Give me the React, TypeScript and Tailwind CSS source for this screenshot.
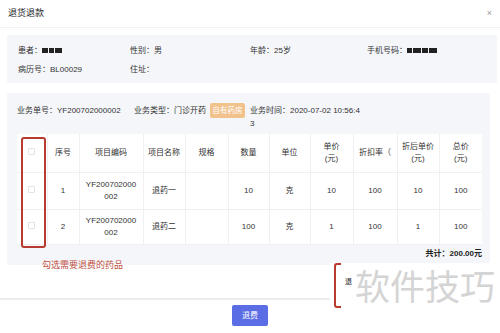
import React from "react";

const cols = [30, 32, 64, 42, 43, 41, 41, 43, 44, 42, 43];

function Blob({ w }: { w: number }) {
  return <span className="inline-block bg-[#222] align-middle mr-[1px]" style={{ width: w, height: 5 }} />;
}

function Cb() {
  return <span className="inline-block w-[7px] h-[7px] border border-[#e3e3e3] bg-white rounded-[1px]" />;
}

export default function App() {
  const rows = [
    { no: "1", name: "退药一", qty: "10", unit: "克", price: "10", rate: "100", dp: "10", total: "100" },
    { no: "2", name: "退药二", qty: "100", unit: "克", price: "1", rate: "100", dp: "1", total: "100" },
  ];
  return (
    <div
      className="w-[500px] h-[333px] bg-white relative overflow-hidden text-[#333]"
      style={{ fontFamily: '"Liberation Sans","Noto Sans CJK SC",sans-serif' }}
    >
      {/* header */}
      <div className="h-[28px] flex items-center justify-between pl-[8px] pr-[8px] border-b border-[#f2f2f2]">
        <span className="text-[9px] text-[#222]">退货退款</span>
        <span className="text-[9px] text-[#999] leading-none">×</span>
      </div>

      <div className="pl-[7px] pr-[3px] pt-[7px]">
        {/* patient card */}
        <div className="bg-[#f5f6fa] h-[48px] rounded-[2px] pl-[11px] pt-[6px] text-[8px]">
          <div className="grid grid-cols-[112px_120px_117px_1fr] h-[19px] items-center">
            <div className="flex items-center">患者：<Blob w={6} /><Blob w={5} /><Blob w={7} /></div>
            <div>性别：男</div>
            <div>年龄：25岁</div>
            <div className="flex items-center">手机号码：<Blob w={5} /><Blob w={8} /><Blob w={6} /><Blob w={8} /></div>
          </div>
          <div className="grid grid-cols-[112px_120px_117px_1fr] h-[19px] items-center">
            <div>病历号：BL00029</div>
            <div>住址：</div>
          </div>
        </div>

        {/* business card */}
        <div className="bg-[#f5f6fa] mt-[10px] w-[483px] h-[172px] rounded-[2px] pl-[10px] pr-[8px] pt-[10px] text-[8px]">
          <div className="flex items-start h-[31px]">
            <div className="w-[117px] leading-[13px] pt-[1px]">业务单号：YF200702000002</div>
            <div className="flex items-start w-[116px]">
              <span className="leading-[13px] pt-[1px]">业务类型：门诊开药</span>
              <span className="ml-[4px] bg-[#f2c28c] text-white text-[7.5px] h-[15px] w-[35px] flex items-center justify-center rounded-[2px]">自有药房</span>
            </div>
            <div className="leading-[13px] pt-[1px]">
              业务时间：2020-07-02 10:56:4
              <br />3
            </div>
          </div>
          <table className="border-collapse bg-white text-[8px] table-fixed" style={{ width: 465 }}>
            <colgroup>
              {cols.map((w, i) => (
                <col key={i} style={{ width: w }} />
              ))}
            </colgroup>
            <thead>
              <tr className="h-[38px]">
                <th className="border-r border-b border-[#f0f0f2] font-normal"><Cb /></th>
                {["序号", "项目编码", "项目名称", "规格", "数量", "单位"].map((t) => (
                  <th key={t} className="border-r border-b border-[#f0f0f2] font-normal text-center">{t}</th>
                ))}
                <th className="border-r border-b border-[#f0f0f2] font-normal leading-[12px]">单价<br />(元)</th>
                <th className="border-r border-b border-[#f0f0f2] font-normal whitespace-nowrap overflow-hidden">折扣率（</th>
                <th className="border-r border-b border-[#f0f0f2] font-normal leading-[12px]">折后单价<br />(元)</th>
                <th className="border-b border-[#f0f0f2] font-normal leading-[12px]">总价<br />(元)</th>
              </tr>
            </thead>
            <tbody>
              {rows.map((r, i) => (
                <tr key={r.no} className={i === 0 ? "h-[37px]" : "h-[35px]"}>
                  <td className="border-r border-b border-[#f0f0f2] text-center"><Cb /></td>
                  <td className="border-r border-b border-[#f0f0f2] text-center">{r.no}</td>
                  <td className="border-r border-b border-[#f0f0f2] text-center leading-[12px]">YF200702000<br />002</td>
                  <td className="border-r border-b border-[#f0f0f2] text-center">{r.name}</td>
                  <td className="border-r border-b border-[#f0f0f2]"></td>
                  <td className="border-r border-b border-[#f0f0f2] text-center">{r.qty}</td>
                  <td className="border-r border-b border-[#f0f0f2] text-center">{r.unit}</td>
                  <td className="border-r border-b border-[#f0f0f2] text-center">{r.price}</td>
                  <td className="border-r border-b border-[#f0f0f2] text-center">{r.rate}</td>
                  <td className="border-r border-b border-[#f0f0f2] text-center">{r.dp}</td>
                  <td className="border-b border-[#f0f0f2] text-center">{r.total}</td>
                </tr>
              ))}
            </tbody>
          </table>
          <div className="text-right mt-[3px] font-bold text-[8px] text-[#222]" style={{ width: 465 }}>共计：200.00元</div>
        </div>
      </div>

      {/* footer separator */}
      <div className="absolute left-0 right-0 top-[298px] h-[2px] bg-[#ececec]" />
      <div className="absolute left-0 right-0 top-[305px] flex justify-center">
        <button className="w-[36px] h-[21px] bg-[#5b6de4] text-white text-[8px] rounded-[2px] flex items-center justify-center">退费</button>
      </div>

      {/* red annotation box on checkbox column */}
      <div className="absolute left-[21px] top-[137px] w-[25px] h-[111px] border-2 border-[#b83b2f] rounded-[3px]" />
      <div className="absolute left-[42px] top-[259px] text-[9px] text-[#c0503f]">勾选需要退费的药品</div>

      {/* overlay with watermark */}
      <div className="absolute left-[330px] top-[263px] w-[170px] h-[48px] bg-white">
        <div className="absolute left-[4px] top-[0px] w-[7px] h-[45px] border-l-2 border-t-2 border-b-2 border-[#b83b2f] rounded-l-[3px]" />
        <div className="absolute left-[15px] top-[14px] text-[7px] text-[#222]">退</div>
        <div className="absolute left-[25px] top-[-2px] text-[35px] leading-[48px] text-[#d4d4d4] tracking-[0px]" style={{ fontFamily: '"Noto Sans CJK SC",sans-serif' }}>软件技巧</div>
      </div>
    </div>
  );
}
